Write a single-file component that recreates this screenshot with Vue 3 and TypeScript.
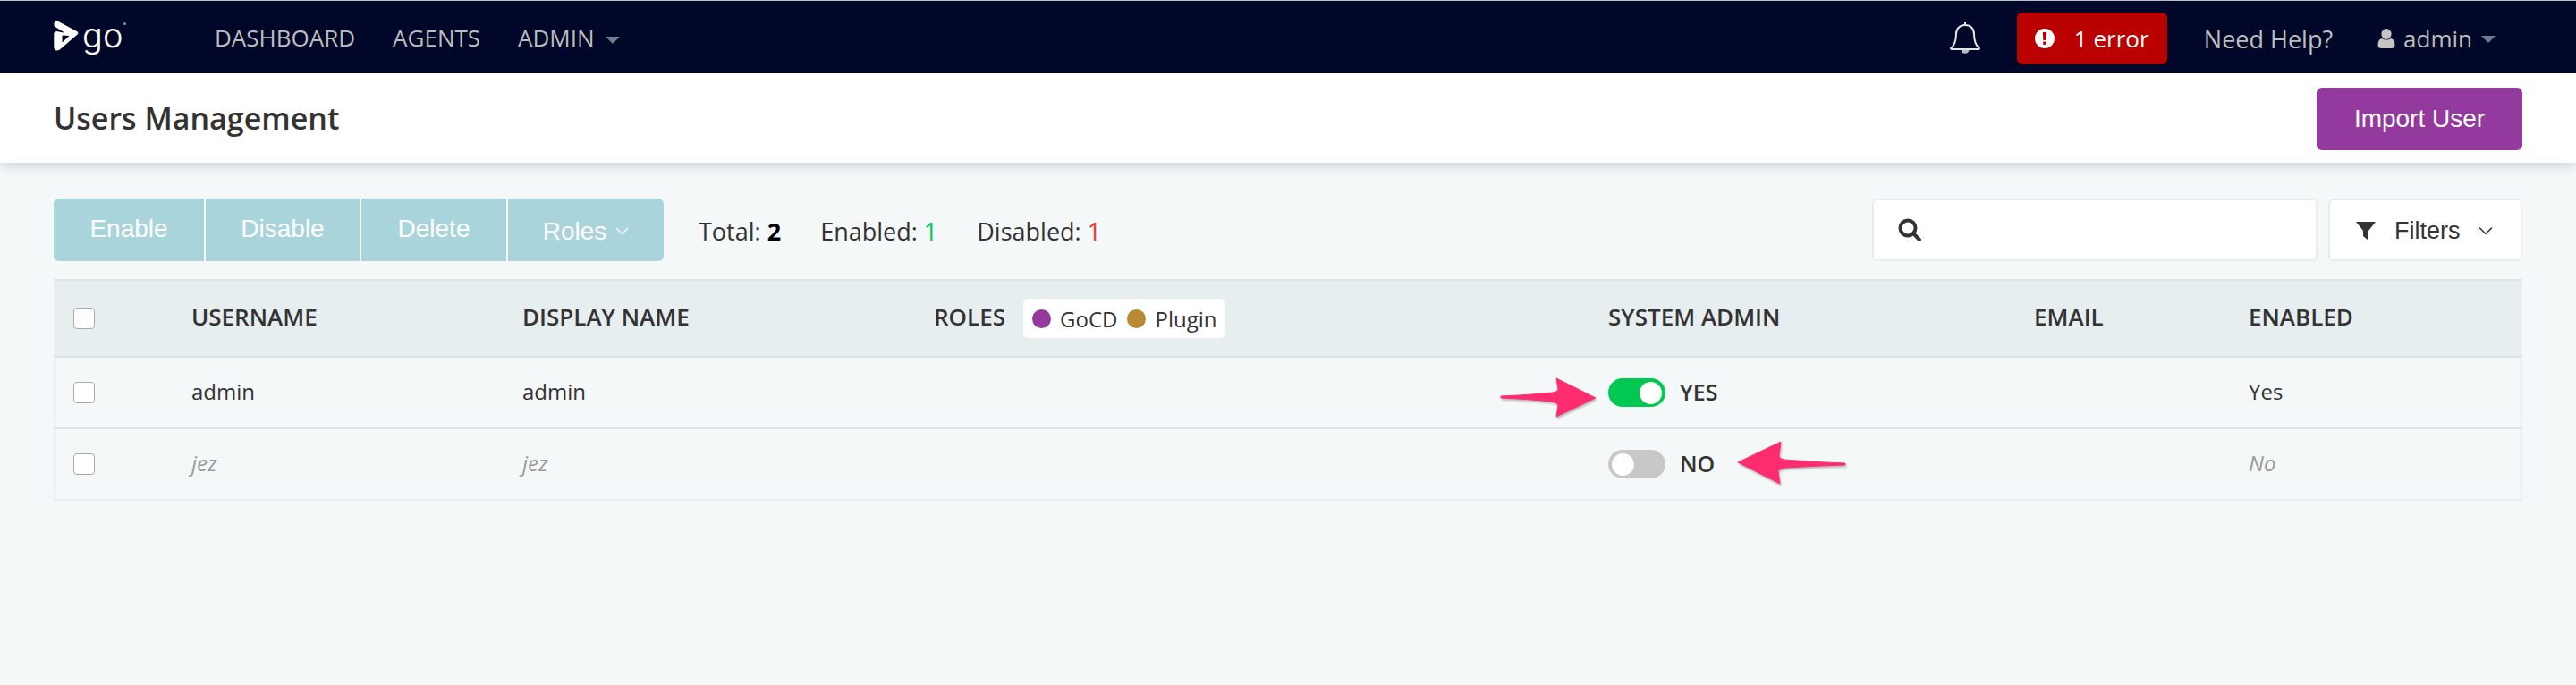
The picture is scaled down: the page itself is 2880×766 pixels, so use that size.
<script setup lang="ts">
interface UserRow {
  username: string,
  displayName: string,
  admin: boolean,
  enabled: string
}

const bulkActions = ['Enable', 'Disable', 'Delete']

const users: UserRow[] = [
  { username: 'admin', displayName: 'admin', admin: true, enabled: 'Yes' },
  { username: 'jez', displayName: 'jez', admin: false, enabled: 'No' }
]
</script>

<template>
  <div class="page">
    <nav class="site-nav">
      <div class="logo">
        <svg class="logo-mark" width="28" height="36" viewBox="0 0 28 36">
          <path d="M3 .8 L26.300 13.200 Q28.400 14.800 26.300 16.800 L6.400 33.800 Q1 36.400 .3 30.800 L.3 15.500 Q.6 12.800 3.400 13 L12.500 14.800 L.9 7.600 Q-.8 2.600 3 .8 Z M9.500 17.500 L9.500 25.500 L17.500 18 Z" fill="#fff" fill-rule="evenodd" />
        </svg>
        <span class="logo-text">go</span>
        <span class="logo-dot"></span>
      </div>
      <div class="nav-links">
        <a>DASHBOARD</a>
        <a>AGENTS</a>
        <a>ADMIN<i class="caret"></i></a>
      </div>
      <div class="nav-right">
        <svg class="bell" width="36" height="38" viewBox="0 0 36 38" fill="none" stroke="#e6e6e6" stroke-width="2">
          <path d="M2 31 C7 27 8 21 8 15 C8 9 12 5 18 5 C24 5 28 9 28 15 C28 21 29 27 34 31 Q34 32 33 32 L3 32 Q2 32 2 31 Z" stroke-linejoin="round" />
          <path d="M18 5 V2" />
          <path d="M14.500 33 A3.600 3.600 0 0 0 21.500 33" fill="#bbb" stroke="#bbb" />
        </svg>
        <div class="error-badge">
          <svg width="22" height="22" viewBox="0 0 22 22">
            <circle cx="11" cy="11" r="11" fill="#fff" />
            <path d="M8.800 4 H13.200 L12.600 13 H9.400 Z" fill="#bb0000" />
            <rect x="9.200" y="14.500" width="3.600" height="3.400" fill="#bb0000" />
          </svg>
          <span>1 error</span>
        </div>
        <a class="help">Need Help?</a>
        <a class="user">
          <svg width="20" height="22" viewBox="0 0 20 22" fill="#c4c4c4">
            <ellipse cx="10" cy="6" rx="5.600" ry="6" />
            <path d="M5 11 Q10 14 15 11 Q19.500 12 19.500 18 Q19.500 22 16 22 H4 Q.5 22 .5 18 Q.5 12 5 11 Z" />
          </svg>
          <span>admin</span>
          <i class="caret"></i>
        </a>
      </div>
    </nav>

    <header class="page-header">
      <h1>Users Management</h1>
      <button class="import-btn">Import User</button>
    </header>

    <main class="content">
      <div class="toolbar">
        <div class="bulk">
          <button v-for="action in bulkActions" :key="action" class="bulk-btn">{{ action }}</button>
          <button class="bulk-btn roles-btn">
            Roles
            <svg width="15" height="9" viewBox="0 0 16 10" fill="none" stroke="#fff" stroke-width="1.500"><path d="M1 1.500 L8 8.500 L15 1.500" /></svg>
          </button>
        </div>
        <div class="stats">
          <span>Total: <b>2</b></span>
          <span>Enabled: <b class="green">1</b></span>
          <span>Disabled: <b class="red">1</b></span>
        </div>
        <div class="search-box">
          <svg width="28" height="28" viewBox="0 0 28 28" fill="none" stroke="#333" stroke-width="4">
            <circle cx="12" cy="12" r="8.500" />
            <path d="M18 18 L25 25" stroke-linecap="round" />
          </svg>
        </div>
        <button class="filter-btn">
          <svg width="24" height="24" viewBox="0 0 24 24" fill="#333"><path d="M1 2 H23 L15 12 V23 L9 18 V12 Z" /></svg>
          <span>Filters</span>
          <svg class="chev" width="16" height="10" viewBox="0 0 16 10" fill="none" stroke="#333" stroke-width="1.500"><path d="M1 1.500 L8 8.500 L15 1.500" /></svg>
        </button>
      </div>

      <div class="table">
        <div class="row head">
          <div><span class="check"></span></div>
          <div class="head-text">USERNAME</div>
          <div class="head-text">DISPLAY NAME</div>
          <div class="roles-head">
            <span class="head-text">ROLES</span>
            <span class="legend">
              <i class="dot purple"></i><span>GoCD</span>
              <i class="dot gold"></i><span>Plugin</span>
            </span>
          </div>
          <div class="head-text">SYSTEM ADMIN</div>
          <div class="head-text">EMAIL</div>
          <div class="head-text">ENABLED</div>
        </div>
        <div v-for="user in users" :key="user.username" class="row body" :class="{ off: !user.admin }">
          <div><span class="check"></span></div>
          <div class="cell">{{ user.username }}</div>
          <div class="cell">{{ user.displayName }}</div>
          <div></div>
          <div class="admin-cell">
            <span class="toggle" :class="{ on: user.admin }"><span class="knob"></span></span>
            <span class="toggle-label">{{ user.admin ? 'YES' : 'NO' }}</span>
          </div>
          <div></div>
          <div class="cell">{{ user.enabled }}</div>
        </div>
      </div>
    </main>

    <svg class="arrow arrow-yes" width="114" height="50" viewBox="0 0 114 50">
      <path d="M2 22 Q30 21 60 18 Q66 17 66 14 L64 2 L108 24 L64 45 L66 32 Q65 29 58 28 Q30 25 2 24 Z" fill="#ff2d6f" stroke="#ff2d6f" stroke-linejoin="round" />
    </svg>
    <svg class="arrow arrow-no" width="130" height="54" viewBox="0 0 130 54">
      <path d="M124 26 Q92 25 56 22 Q50 21 50 18 L52 2 L4 25 L51 49 L49 35 Q50 32 58 31 Q92 29 124 28 Z" fill="#ff2d6f" stroke="#ff2d6f" stroke-linejoin="round" />
    </svg>
  </div>
</template>

<style>
html, body {
  margin: 0;
  background: #f4f8f9;
}
</style>

<style scoped>
.page {
  position: relative;
  min-height: 766px;
  background: #f4f8f9;
  color: #333;
  font-family: "Open Sans", sans-serif;
  font-size: 24px;
  overflow: hidden;
}

.site-nav {
  display: flex;
  align-items: center;
  height: 81px;
  padding: 0 60px;
  background: #000728;
  border-top: 1px solid #b9bcc6;
  font-size: 26px;
}

.logo {
  position: relative;
  display: flex;
  align-items: center;
  width: 180px;
  height: 80px;
}

.logo-mark {
  margin-top: -4px;
  margin-right: 4px;
}

.logo-text {
  margin-top: -6px;
  color: #fff;
  font-family: Inter, sans-serif;
  font-size: 38px;
  font-weight: 300;
  line-height: 1;
}

.logo-dot {
  position: absolute;
  left: 78px;
  top: 23px;
  width: 3px;
  height: 3px;
  border-radius: 50%;
  background: #8b8f9e;
}

.nav-links {
  display: flex;
  gap: 42px;
  color: #bdbdbd;
}

.caret {
  display: inline-block;
  width: 0;
  height: 0;
  margin-left: 12px;
  vertical-align: 3px;
  border-left: 8px solid transparent;
  border-right: 8px solid transparent;
  border-top: 8px solid #6c7f8a;
}

.nav-right {
  display: flex;
  align-items: center;
  margin-left: auto;
  margin-right: 30px;
  color: #bdbdbd;
}

.bell {
  margin-top: 1px;
}

.error-badge {
  display: flex;
  align-items: center;
  gap: 22px;
  width: 168px;
  height: 58px;
  margin-left: 40px;
  margin-top: 3px;
  padding-left: 20px;
  box-sizing: border-box;
  background: #bb0000;
  border-radius: 6px;
  color: #fff;
}

.help {
  margin-left: 41px;
  margin-top: 3px;
  font-size: 27px;
}

.user {
  display: flex;
  align-items: center;
  gap: 9px;
  margin-left: 50px;
  margin-top: 3px;
}

.user .caret {
  margin-left: 1px;
  margin-top: 2px;
}

.page-header {
  display: flex;
  align-items: center;
  justify-content: space-between;
  height: 100px;
  padding: 0 60px;
  background: #fff;
  box-shadow: 0 4px 14px rgba(40, 60, 70, .18);
}

.page-header h1 {
  margin: 0;
  font-size: 34px;
  font-weight: 600;
  color: #333;
}

.import-btn {
  width: 230px;
  height: 70px;
  margin-top: 2px;
  border: 0;
  border-radius: 6px;
  background: #943a9e;
  color: #fff;
  font-family: "Liberation Sans", sans-serif;
  font-size: 28px;
}

.content {
  padding: 40px 60px 0;
}

.toolbar {
  display: flex;
  align-items: center;
  height: 70px;
}

.bulk {
  display: flex;
  gap: 2px;
  overflow: hidden;
  border-radius: 6px;
}

.bulk-btn {
  display: flex;
  align-items: center;
  justify-content: center;
  gap: 10px;
  width: 168px;
  height: 70px;
  padding: 0 0 3px;
  border: 0;
  background: #a9d4db;
  color: #fff;
  font-family: "Liberation Sans", sans-serif;
  font-size: 28px;
}

.bulk-btn:nth-child(2) {
  width: 172px;
}

.bulk-btn:nth-child(3) {
  width: 162px;
}

.roles-btn {
  width: 174px;
  padding: 3px 0 0;
}

.stats {
  display: flex;
  gap: 44px;
  margin-left: 39px;
  margin-top: 2px;
  font-size: 27px;
  color: #333;
}

.stats b {
  font-weight: 700;
  color: #000;
}

.stats .green {
  font-weight: 500;
  color: #00c853;
}

.stats .red {
  font-weight: 500;
  color: #ff3333;
}

.search-box {
  display: flex;
  align-items: center;
  width: 498px;
  height: 70px;
  margin-left: auto;
  padding-left: 26px;
  box-sizing: border-box;
  background: #fff;
  border: 2px solid #e7eef0;
  border-radius: 6px;
}

.filter-btn {
  display: flex;
  align-items: center;
  width: 217px;
  height: 70px;
  margin-left: 12px;
  padding: 2px 0 0 28px;
  box-sizing: border-box;
  background: #fff;
  border: 2px solid #e7eef0;
  border-radius: 6px;
  color: #333;
  font-family: "Liberation Sans", sans-serif;
  font-size: 27px;
}

.filter-btn span {
  margin-left: 20px;
}

.filter-btn .chev {
  margin-left: 20px;
}

.table {
  margin-top: 20px;
}

.row {
  display: grid;
  grid-template-columns: 154px 370px 460px 754px 476px 240px 306px;
  align-items: center;
  box-sizing: border-box;
}

.row > div:first-child {
  padding-left: 22px;
}

.head {
  height: 88px;
  background: #e7eef0;
  border-top: 2px solid #dfe3e8;
  border-bottom: 2px solid #dfe3e8;
  font-size: 26px;
}

.head-text {
  margin-top: -4px;
  font-weight: 600;
}

.cell {
  margin-top: -3px;
}

.body {
  height: 80px;
  border-bottom: 2px solid #dfe3e8;
  box-shadow: inset 2px 0 #e9eef0, inset -2px 0 #e9eef0;
}

.body.off {
  border-bottom-color: #e7ecef;
}

.body.off .cell {
  color: #999;
  font-style: italic;
}

.check {
  display: block;
  width: 24px;
  height: 24px;
  box-sizing: border-box;
  background: #fff;
  border: 1px solid #aaa;
  border-radius: 4px;
}

.roles-head {
  display: flex;
  align-items: center;
  gap: 20px;
}

.legend {
  display: flex;
  align-items: center;
  height: 44px;
  padding: 0 10px;
  background: #fff;
  border-radius: 6px;
  font-size: 24px;
  font-weight: 500;
}

.dot {
  width: 21px;
  height: 21px;
  margin-right: 10px;
  border-radius: 50%;
}

.dot.gold {
  margin-left: 11px;
}

.purple {
  background: #943a9e;
}

.gold {
  background: #b78a33;
}

.admin-cell {
  display: flex;
  align-items: center;
  gap: 16px;
}

.toggle {
  display: flex;
  align-items: center;
  width: 64px;
  height: 32px;
  padding: 0 4px;
  box-sizing: border-box;
  background: #c8c8c8;
  border-radius: 16px;
}

.toggle.on {
  justify-content: flex-end;
  background: #00c853;
}

.knob {
  width: 25px;
  height: 25px;
  border-radius: 50%;
  background: #fff;
}

.toggle-label {
  margin-top: -3px;
  font-weight: 600;
  font-size: 25px;
  color: #333;
}

.arrow {
  position: absolute;
  filter: drop-shadow(1px 2px 1px rgba(0, 0, 0, .25));
}

.arrow-yes {
  left: 1676px;
  top: 421px;
}

.arrow-no {
  left: 1939px;
  top: 492px;
}
</style>
